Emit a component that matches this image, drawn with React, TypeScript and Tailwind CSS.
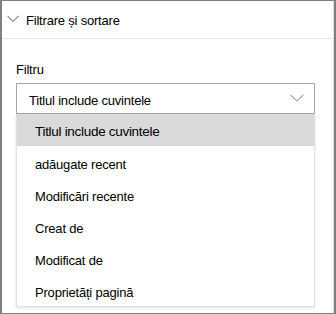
import React from "react";

const items = [
  "Titlul include cuvintele",
  "adăugate recent",
  "Modificări recente",
  "Creat de",
  "Modificat de",
  "Proprietăți pagină",
];

export default function App() {
  return (
    <div
      className="w-[336px] h-[314px] bg-white border-t border-l-2 border-r-2 border-b border-[#7f7f7f] overflow-hidden text-black"
      style={{ fontFamily: '"Segoe UI", "Liberation Sans", Arial, sans-serif' }}
    >
      <div className="h-full border-r border-[#e3e3e3]">
        <div className="h-[38px] flex items-center border-b border-[#e6e6e6]">
          <svg width="12" height="8" viewBox="0 0 12 8" className="ml-[5px] mt-[-2px]">
            <path d="M0.5 0.8 L6 6.5 L11.5 0.8" fill="none" stroke="#8a8a8a" strokeWidth="1.1" />
          </svg>
          <span className="ml-[7px] text-[13px] leading-none mt-[2px] tracking-[-0.2px]">Filtrare și sortare</span>
        </div>
        <div className="pl-[14px] pr-[18px]">
          <div className="mt-[24px] text-[13px] leading-none tracking-[-0.2px]">Filtru</div>
          <div className="mt-[7px] h-[31px] border border-[#a6a6a6] flex items-center justify-between pl-[12px] pr-[10px]">
            <span className="text-[13px] leading-none mt-[3px] tracking-[-0.2px]">Titlul include cuvintele</span>
            <svg width="14" height="8" viewBox="0 0 14 8" className="mt-[-2px]">
              <path d="M0.5 0.8 L7 6.8 L13.5 0.8" fill="none" stroke="#9a9a9a" strokeWidth="1.1" />
            </svg>
          </div>
          <div className="border-x border-b border-[#e1e1e1] shadow-[0_1px_3px_rgba(0,0,0,0.12)]">
            {items.map((t, i) => (
              <div
                key={t}
                className={
                  i === 0
                    ? "h-[32px] flex items-center pl-[18px] bg-[#dadada] text-[13.5px] tracking-[-0.3px]"
                    : "h-[32px] flex items-center pl-[18px] text-[13px] tracking-[-0.2px]"
                }
              >
                <span className="leading-none mt-[4px]">{t}</span>
              </div>
            ))}
          </div>
        </div>
      </div>
    </div>
  );
}
